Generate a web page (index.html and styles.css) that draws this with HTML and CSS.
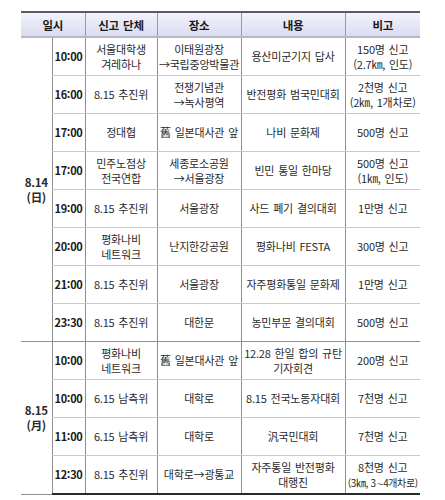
FILE: index.html
```html
<!DOCTYPE html>
<html lang="ko">
<head>
<meta charset="utf-8">
<link rel="stylesheet" href="styles.css">
</head>
<body>
<table class="sched">
  <colgroup>
    <col class="c-day"><col class="c-time"><col class="c-org"><col class="c-place"><col class="c-desc"><col class="c-note">
  </colgroup>
  <thead>
    <tr>
      <th colspan="2">일시</th>
      <th>신고 단체</th>
      <th>장소</th>
      <th>내용</th>
      <th class="last">비고</th>
    </tr>
  </thead>
  <tbody>
    <tr>
      <td class="day" rowspan="8">8.14<br>(日)</td>
      <td class="time">10:00</td>
      <td>서울대학생<br>겨레하나</td>
      <td>이태원광장<br>→국립중앙박물관</td>
      <td>용산미군기지 답사</td>
      <td class="last">150명 신고<br>(2.7㎞, 인도)</td>
    </tr>
    <tr>
      <td class="time">16:00</td>
      <td>8.15 추진위</td>
      <td>전쟁기념관<br>→녹사평역</td>
      <td>반전평화 범국민대회</td>
      <td class="last">2천명 신고<br>(2㎞, 1개차로)</td>
    </tr>
    <tr>
      <td class="time">17:00</td>
      <td>정대협</td>
      <td>舊 일본대사관 앞</td>
      <td>나비 문화제</td>
      <td class="last">500명 신고</td>
    </tr>
    <tr>
      <td class="time">17:00</td>
      <td>민주노점상<br>전국연합</td>
      <td>세종로소공원<br>→서울광장</td>
      <td>빈민 통일 한마당</td>
      <td class="last">500명 신고<br>(1㎞, 인도)</td>
    </tr>
    <tr>
      <td class="time">19:00</td>
      <td>8.15 추진위</td>
      <td>서울광장</td>
      <td>사드 폐기 결의대회</td>
      <td class="last">1만명 신고</td>
    </tr>
    <tr>
      <td class="time">20:00</td>
      <td>평화나비<br>네트워크</td>
      <td>난지한강공원</td>
      <td>평화나비 FESTA</td>
      <td class="last">300명 신고</td>
    </tr>
    <tr>
      <td class="time">21:00</td>
      <td>8.15 추진위</td>
      <td>서울광장</td>
      <td>자주평화통일 문화제</td>
      <td class="last">1만명 신고</td>
    </tr>
    <tr class="daysep">
      <td class="time">23:30</td>
      <td>8.15 추진위</td>
      <td>대한문</td>
      <td>농민부문 결의대회</td>
      <td class="last">500명 신고</td>
    </tr>
    <tr>
      <td class="day" rowspan="4">8.15<br>(月)</td>
      <td class="time">10:00</td>
      <td>평화나비<br>네트워크</td>
      <td>舊 일본대사관 앞</td>
      <td>12.28 한일 합의 규탄<br>기자회견</td>
      <td class="last">200명 신고</td>
    </tr>
    <tr>
      <td class="time">10:00</td>
      <td>6.15 남측위</td>
      <td>대학로</td>
      <td>8.15 전국노동자대회</td>
      <td class="last">7천명 신고</td>
    </tr>
    <tr>
      <td class="time">11:00</td>
      <td>6.15 남측위</td>
      <td>대학로</td>
      <td>汎국민대회</td>
      <td class="last">7천명 신고</td>
    </tr>
    <tr>
      <td class="time">12:30</td>
      <td>8.15 추진위</td>
      <td>대학로→광통교</td>
      <td>자주통일 반전평화<br>대행진</td>
      <td class="last">8천명 신고<br><span class="small">(3㎞, 3∼4개차로)</span></td>
    </tr>
  </tbody>
</table>
</body>
</html>
```

FILE: styles.css
```css
html, body {
  margin: 0;
  padding: 0;
  background: #ffffff;
}

body {
  font-family: "Noto Sans CJK KR", "Noto Sans", sans-serif;
  color: #2a2a2a;
}

.sched {
  margin: 11px 0 0 21px;
  width: 399px;
  border-collapse: collapse;
  table-layout: fixed;
  font-size: 11px;
  line-height: 15px;
  letter-spacing: -0.2px;
  word-spacing: 1px;
}

.c-day { width: 31px; }
.c-time { width: 33px; }
.c-org { width: 72px; }
.c-place { width: 84px; }
.c-desc { width: 104px; }
.c-note { width: 75px; }

.sched th {
  height: 23px;
  padding: 0;
  font-weight: bold;
  font-size: 11.5px;
  line-height: 14px;
  color: #1a1a1a;
  background: linear-gradient(#f3f3fb, #d9dbf1);
  border-top: 2px solid #5a5a66;
  border-bottom: 2px solid #b8b8c4;
  border-left: 1px solid #9a9aa6;
  text-align: center;
  vertical-align: middle;
}

.sched th:first-child {
  border-left: none;
}

.sched td {
  height: 37px;
  padding: 0;
  text-align: center;
  vertical-align: middle;
  border-left: 1px solid #8e8e8e;
  border-bottom: 1px solid #c8c8c8;
  white-space: nowrap;
  overflow: hidden;
}

.sched td.day {
  border-left: none;
  font-weight: bold;
  font-size: 11.5px;
  line-height: 15px;
  letter-spacing: -0.3px;
  border-bottom: 1px solid #8e8e8e;
}

.sched td.time {
  font-weight: bold;
  font-size: 11px;
  letter-spacing: -0.3px;
  color: #1a1a1a;
}

.sched tr.daysep td {
  border-bottom: 1px solid #8e8e8e;
}

.sched tbody tr:last-child td,
.sched tbody tr:last-child td.day {
  border-bottom: 2px solid #2a2a2a;
}

.small {
  font-size: 10px;
  letter-spacing: -0.4px;
  word-spacing: 0;
}
```
